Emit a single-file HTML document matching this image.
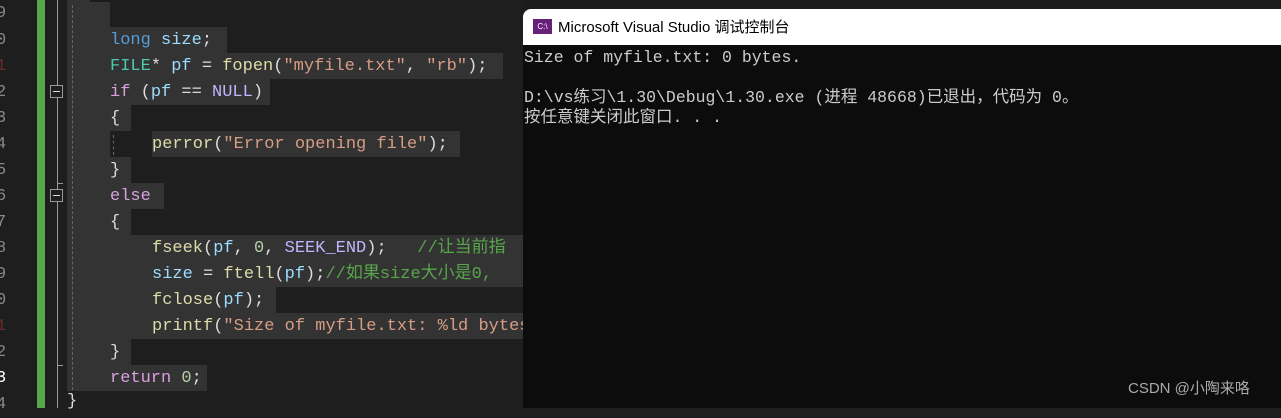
<!DOCTYPE html>
<html><head><meta charset="utf-8"><style>
body{margin:0;width:1281px;height:408px;overflow:hidden;background:#1e1e1e;position:relative;font-family:"Liberation Mono","Noto Sans CJK SC",monospace}
.a{position:absolute}
.ln{position:absolute;left:-4px;font-size:17px;color:#2b91af;line-height:26px}
.row{position:absolute;height:26px;line-height:28px;font-size:17px;white-space:pre;background:#333;color:#dcdcdc}
.k{color:#569cd6}.v{color:#9cdcfe}.f{color:#dcdcaa}.s{color:#d69d85}.m{color:#beb7ff}.t{color:#4ec9b0}.p{color:#d8a0df}.c{color:#57a64a}.n{color:#b5cea8}
.fold{position:absolute;left:50px;width:11px;height:11px;border:1px solid #999;background:#1e1e1e}
.fold:after{content:"";position:absolute;left:2px;top:5px;width:7px;height:1px;background:#ddd}
.con{position:absolute;left:524px;font-size:16.5px;color:#cccccc;white-space:pre;line-height:20px}
</style></head><body>
<div class="a" style="left:37px;top:0;width:8px;height:408px;background:#57a64a"></div>
<div class="a" style="left:57px;top:0;width:1px;height:408px;background:#999"></div>
<div class="a" style="left:57px;top:183px;width:6px;height:1px;background:#999"></div>
<div class="a" style="left:57px;top:365px;width:6px;height:1px;background:#999"></div>
<div class="fold" style="top:85px"></div>
<div class="fold" style="top:189px"></div>
<div class="a" style="left:67px;top:0;width:43px;height:391px;background:#333"></div>
<div class="a" style="left:90px;top:0;width:20px;height:2px;background:#1a1a1a"></div>
<div class="a" style="left:72px;top:5px;width:0;height:385px;border-left:1px dashed #666"></div>
<div class="a" style="left:113px;top:135px;width:0;height:20px;border-left:1px dashed #666"></div>
<div class="a" style="left:113px;top:237px;width:0;height:100px;border-left:1px dashed #666"></div>

<div class="ln" style="top:1px;color:#888">9</div>
<div class="ln" style="top:28px;color:#888">0</div>
<div class="ln" style="top:54px;color:#6b2a2a">1</div>
<div class="ln" style="top:80px;color:#888">2</div>
<div class="ln" style="top:106px;color:#888">3</div>
<div class="ln" style="top:132px;color:#888">4</div>
<div class="ln" style="top:158px;color:#888">5</div>
<div class="ln" style="top:184px;color:#888">6</div>
<div class="ln" style="top:210px;color:#888">7</div>
<div class="ln" style="top:236px;color:#888">8</div>
<div class="ln" style="top:262px;color:#888">9</div>
<div class="ln" style="top:288px;color:#888">0</div>
<div class="ln" style="top:314px;color:#6b2a2a">1</div>
<div class="ln" style="top:340px;color:#888">2</div>
<div class="ln" style="top:366px;color:#fff">3</div>
<div class="ln" style="top:392px;color:#888">4</div>

<div class="row" style="left:110px;top:27px;padding-right:15px"><span class="k">long</span> <span class="v">size</span>;</div>
<div class="row" style="left:110px;top:53px;padding-right:15px"><span class="t">FILE</span>* <span class="v">pf</span> = <span class="f">fopen</span>(<span class="s">"myfile.txt"</span>, <span class="s">"rb"</span>);</div>
<div class="row" style="left:110px;top:79px;padding-right:7px"><span class="p">if</span> (<span class="v">pf</span> == <span class="m">NULL</span>)</div>
<div class="row" style="left:110px;top:105px;padding-right:11px">{</div>
<div class="row" style="left:152px;top:131px;padding-right:12px"><span class="f">perror</span>(<span class="s">"Error opening file"</span>);</div>
<div class="row" style="left:110px;top:157px;padding-right:11px">}</div>
<div class="row" style="left:110px;top:183px;padding-right:13px"><span class="p">else</span></div>
<div class="row" style="left:110px;top:209px;padding-right:11px">{</div>
<div class="row" style="left:110px;top:235px;width:414px;padding-left:42px;box-sizing:border-box"><span class="f">fseek</span>(<span class="v">pf</span>, <span class="n">0</span>, <span class="m">SEEK_END</span>);   <span class="c">//让当前指</span></div>
<div class="row" style="left:110px;top:261px;width:414px;padding-left:42px;box-sizing:border-box;overflow:hidden"><span class="v">size</span> = <span class="f">ftell</span>(<span class="v">pf</span>);<span class="c">//如果size大小是0,</span></div>
<div class="row" style="left:110px;top:287px;padding-left:42px;padding-right:12px"><span class="f">fclose</span>(<span class="v">pf</span>);</div>
<div class="row" style="left:110px;top:313px;width:414px;padding-left:42px;box-sizing:border-box;overflow:hidden"><span class="f">printf</span>(<span class="s">"Size of myfile.txt: %ld bytes</span></div>
<div class="row" style="left:110px;top:339px;padding-right:11px">}</div>
<div class="row" style="left:110px;top:365px;padding-right:5px"><span class="p">return</span> <span class="n">0</span>;</div>
<div class="a" style="left:67px;top:392px;font-size:17px;line-height:20px;color:#dcdcdc">}</div>

<div class="a" style="left:523px;top:0;width:758px;height:9px;background:#1c1c1c"></div>
<div class="a" style="left:523px;top:9px;width:758px;height:399px;background:#0c0c0c;border-top-left-radius:8px;overflow:hidden">
 <div class="a" style="left:0;top:0;width:758px;height:36px;background:#fff"></div>
 <div class="a" style="left:10px;top:10px;width:19px;height:15px;background:#68217a;color:#fff;font-size:8px;line-height:15px;text-align:center;font-family:'Liberation Sans',sans-serif">C:\</div>
 <div class="a" style="left:35px;top:8px;font-size:15px;line-height:22px;color:#000;font-family:'Liberation Sans','Noto Sans CJK SC',sans-serif">Microsoft Visual Studio 调试控制台</div>
</div>
<div class="con" style="top:48px">Size of myfile.txt: 0 bytes.</div>
<div class="con" style="top:88px">D:\vs练习\1.30\Debug\1.30.exe (进程 48668)已退出，代码为 0。</div>
<div class="con" style="top:108px">按任意键关闭此窗口. . .</div>
<div class="a" style="left:1128px;top:379px;font-size:15px;line-height:20px;color:#aaa;font-family:'Liberation Sans','Noto Sans CJK SC',sans-serif">CSDN @小陶来咯</div>
</body></html>
